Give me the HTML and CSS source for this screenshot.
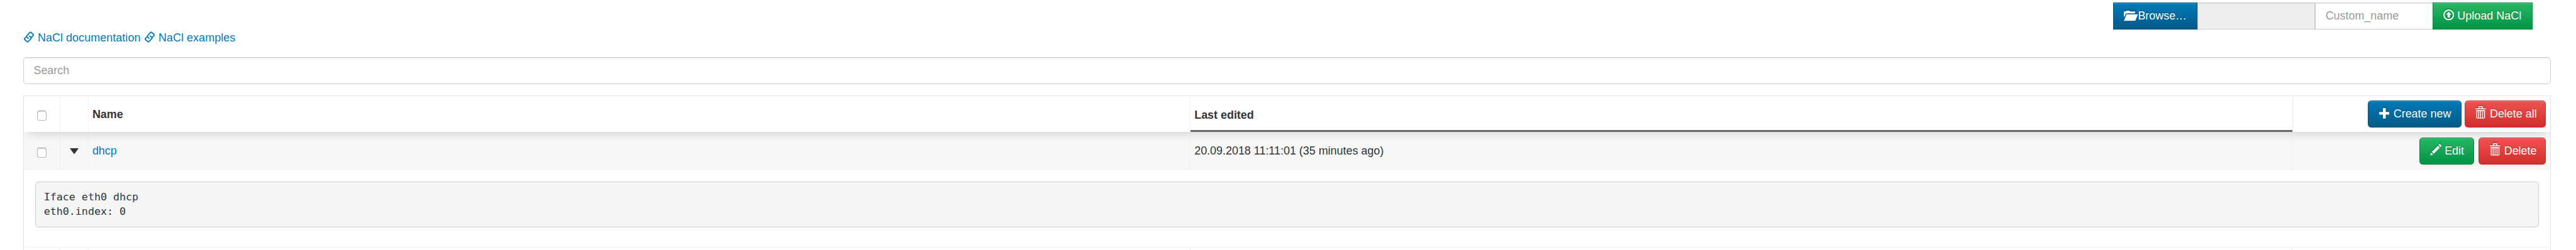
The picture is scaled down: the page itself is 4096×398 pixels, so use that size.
FILE: index.html
```html
<!DOCTYPE html>
<html lang="en">
<head>
<meta charset="utf-8">
<title>NaCl</title>
<link rel="stylesheet" href="styles.css">
</head>
<body>
<svg class="defs" aria-hidden="true">
  <symbol id="link" viewBox="0 0 26 28"><path d="M12.2 18.2 7.3 13.6Q6.3 12.4 7.3 11.2L15 2.4Q16.6 1 18.2 2.4L24 7.4Q25 9 24 10.4L19.8 14.2M13.6 10.6 18.6 15.3Q19.6 16.5 18.6 17.7L11.2 25.6Q9.4 27 7.8 25.6L2 20.6Q1 19 2 17.6L6 13.8" fill="none" stroke="currentColor" stroke-width="3"/></symbol>
  <symbol id="folder" viewBox="0 0 35 26"><path d="M0 17V2H5Q5 0 7 0H13Q15 0 15 2H28V6.5H8Q5.5 6.5 4.5 8.5ZM0 26 6.5 9H35L28 26Z" fill="currentColor"/></symbol>
  <symbol id="upload" viewBox="0 0 27 27"><circle cx="13.5" cy="13.5" r="11.9" fill="none" stroke="currentColor" stroke-width="3"/><path d="M13.5 5.5 19.8 13H16.2V20.5H10.8V13H7.2Z" fill="currentColor"/></symbol>
  <symbol id="plus" viewBox="0 0 26 26"><path d="M9.4 1Q9.4 0 10.4 0H15.4Q16.4 0 16.4 1V9.6H25Q26 9.6 26 10.6V15.4Q26 16.4 25 16.4H16.4V26H9.4V16.4H1Q0 16.4 0 15.4V10.6Q0 9.6 1 9.6H9.4Z" fill="currentColor"/></symbol>
  <symbol id="trash" viewBox="0 0 26 31"><path d="M0 5.5H7.6V2Q7.6 0 9.6 0H16.4Q18.4 0 18.4 2V5.5H26V7.9H0ZM9.8 2.2V5.5H16.2V2.2Z" fill="currentColor" fill-rule="evenodd"/><path d="M3.4 10.9H22.8V28.2Q22.8 29.9 21.1 29.9H5.1Q3.4 29.9 3.4 28.2ZM8.2 11V29M13 11V29M17.9 11V29" fill="none" stroke="currentColor" stroke-width="2.2"/></symbol>
  <symbol id="pencil" viewBox="0 0 28 29"><path d="M0 29 2.4 21.5 7.5 26.5ZM4.3 20 19.6 4.5 24 9.2 9 24.6ZM21 2.8 23.3 .5Q24 0 24.7 .6L28 4.2Q28.4 5 27.8 5.6L25.6 7.7Z" fill="currentColor"/></symbol>
</svg>
<form class="upload">
  <div class="btn blue square browse"><svg class="i-folder"><use href="#folder"/></svg><span>Browse…</span></div>
  <div class="field file"></div>
  <div class="field name">Custom_name</div>
  <div class="btn green square send"><svg class="i-upload"><use href="#upload"/></svg><span>Upload NaCl</span></div>
</form>
<nav class="links">
  <a><svg class="i-link"><use href="#link"/></svg><span>NaCl documentation</span></a>
  <a><svg class="i-link"><use href="#link"/></svg><span>NaCl examples</span></a>
</nav>
<div class="search">Search</div>
<section class="table">
  <div class="row head">
    <div class="cell mid"><i class="check"></i></div>
    <div class="cell"></div>
    <div class="cell title">Name</div>
    <div class="cell title sorted">Last edited</div>
    <div class="cell actions">
      <div class="btn blue create"><svg class="i-plus"><use href="#plus"/></svg><span>Create new</span></div>
      <div class="btn red delete-all"><svg class="i-trash"><use href="#trash"/></svg><span>Delete all</span></div>
    </div>
  </div>
  <div class="row item">
    <div class="cell mid"><i class="check"></i></div>
    <div class="cell mid"><svg class="caret" viewBox="0 0 22 14"><path d="M0 0H22L12.3 13.3Q11 14.5 9.7 13.3Z" fill="#333"/></svg></div>
    <div class="cell"><a>dhcp</a></div>
    <div class="cell">20.09.2018 11:11:01 (35 minutes ago)</div>
    <div class="cell actions wide">
      <div class="btn green edit"><svg class="i-pencil"><use href="#pencil"/></svg><span>Edit</span></div>
      <div class="btn red delete"><svg class="i-trash"><use href="#trash"/></svg><span>Delete</span></div>
    </div>
  </div>
  <div class="detail"><pre>Iface eth0 dhcp
eth0.index: 0</pre></div>
  <div class="row next">
    <div class="cell"></div><div class="cell"></div><div class="cell"></div><div class="cell"></div><div class="cell"></div>
  </div>
</section>
</body>
</html>
```
FILE: styles.css
```css
* { box-sizing: border-box; }
html { overflow: hidden; background: #fff; }
body {
  zoom: 1.28;
  display: flex;
  flex-direction: column;
  width: 3200px;
  height: 311px;
  margin: 0;
  padding: 3px 31px 0 29px;
  overflow: hidden;
  font: 14px/20px "Liberation Sans", Arial, sans-serif;
  color: #333;
}
svg { display: block; flex: none; }
.defs { position: absolute; width: 0; height: 0; }
a { color: #007ab8; }

.upload { display: flex; flex: none; height: 34px; margin: 0 23px 0 0; justify-content: flex-end; }
.field {
  width: 146px;
  padding: 0 12px;
  border: 1px solid #ccc;
  line-height: 32px;
  color: #999;
  box-shadow: inset 0 1px 1px rgba(0,0,0,.075);
}
.file { background: #eee; }
.name { border-right: 0; }

.btn {
  display: flex;
  align-items: center;
  flex: none;
  height: 34px;
  border: 1px solid;
  border-radius: 4px;
  color: #fff;
  white-space: nowrap;
  text-shadow: 0 -1px 0 rgba(0,0,0,.25);
  box-shadow: inset 0 1px 0 rgba(255,255,255,.2), 0 1px 2px rgba(0,0,0,.05);
}
.btn svg { filter: drop-shadow(0 -1px 0 rgba(0,0,0,.2)); }
.square { border-radius: 0; }
.blue { background: linear-gradient(#007ab8, #005a87); border-color: #005580; }
.green { background: linear-gradient(#2ab764, #009245); border-color: #008a40; }
.red { background: linear-gradient(#ee5351, #d12d2c); border-color: #c72b2b; }
.browse { width: 105px; padding-left: 12.2px; gap: .3px; }
.send { width: 124px; padding-left: 12.2px; gap: 4px; letter-spacing: .05px; }
.create { width: 116px; padding-left: 12.7px; gap: 5px; }
.delete-all { width: 101px; padding-left: 12.7px; gap: 4.7px; }
.edit { width: 68px; padding-left: 12px; gap: 4.3px; }
.delete { width: 84px; padding-left: 13.7px; gap: 4.5px; }

.i-folder { width: 17.5px; height: 13px; margin-bottom: 1px; }
.i-upload { width: 13.5px; height: 13.5px; margin-bottom: 2.5px; }
.i-plus { width: 13px; height: 13px; margin-bottom: 1px; }
.i-trash { width: 13px; height: 15.5px; margin-bottom: 3.5px; }
.i-pencil { width: 14px; height: 14.5px; margin-bottom: 2.5px; }

.links { display: flex; gap: 5px; flex: none; height: 34px; padding: .8px 0 0 .6px; letter-spacing: .06px; }
.links a { display: flex; align-items: flex-start; gap: 4.6px; }
.i-link { width: 12.6px; height: 14px; margin-top: 1.4px; }
.search {
  flex: none;
  height: 34px;
  padding: 0 12px;
  border: 1px solid #ccc;
  border-radius: 4px;
  line-height: 32px;
  color: #999;
  box-shadow: inset 0 1px 1px rgba(0,0,0,.075);
}

.table { flex: 1; margin-top: 14px; border: 1px solid #e5e5e5; border-bottom: 0; }
.row { display: grid; grid-template-columns: 45px 35px 1369px 1369px 320px; }
.cell { display: flex; align-items: center; padding: 0 5px; border-right: 1px solid #f0f0f0; }
.cell:last-child { border-right: 0; }
.mid { justify-content: center; }
.head {
  position: relative;
  z-index: 1;
  height: 44px;
  background: #fff;
  box-shadow: 0 9px 10px -5px rgba(0,0,0,.13);
}
.title { padding-top: 2.5px; font-weight: bold; }
.sorted { border-bottom: 3px solid #666; padding-top: 5.5px; border-right: 0; }
.sorted + .cell { box-shadow: inset 1px 0 #f0f0f0; }
.item { height: 48px; background: #f7f7f7; }
.actions { justify-content: flex-end; gap: 4px; }
.wide { gap: 5px; }
.check {
  width: 12px;
  height: 12px;
  margin-top: 4px;
  border: 1px solid #b4b4b4;
  border-top-color: #999;
  border-radius: 3px;
  background: #fff;
  box-shadow: inset 0 1px 1px rgba(0,0,0,.12);
}
.caret { width: 11px; height: 7px; }
.detail { height: 96px; padding: 14px 14px 0; border-bottom: 1px solid #f0f0f0; background: #fff; }
pre {
  height: 57px;
  margin: 0;
  padding: 9.5px 10px;
  border: 1px solid #ccc;
  border-radius: 4px;
  background: #f5f5f5;
  font: 13px/18.2px "DejaVu Sans Mono", monospace;
}
.next { height: 3px; }
```
